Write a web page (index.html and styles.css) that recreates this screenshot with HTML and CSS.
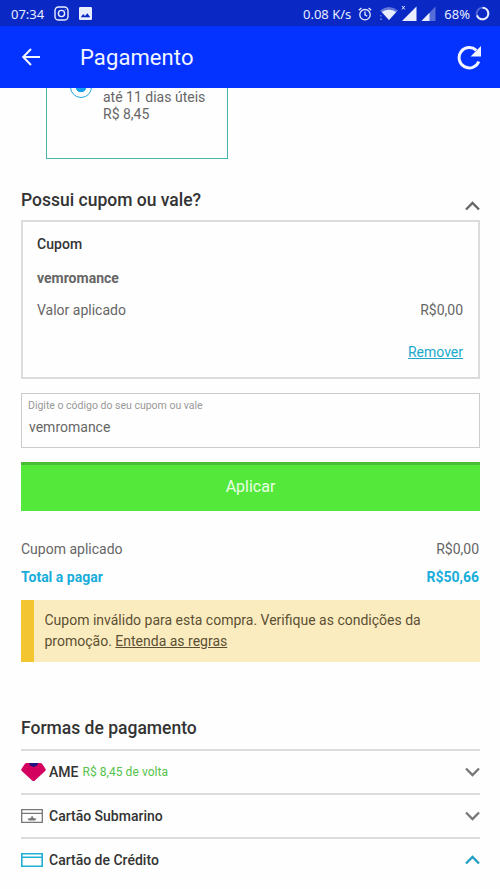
FILE: index.html
```html
<!DOCTYPE html>
<html lang="pt-BR">
<head>
<meta charset="utf-8">
<meta name="viewport" content="width=device-width, initial-scale=1">
<title>Pagamento</title>
<link rel="stylesheet" href="styles.css">
</head>
<body>
<div class="status">
  <span class="clock">07:34</span>
  <svg class="insta" width="15" height="15" viewBox="0 0 15 15" fill="none" stroke="currentColor" stroke-width="1.4"><rect x="1" y="1" width="13" height="13" rx="3.6"/><circle cx="7.5" cy="7.5" r="3.1"/><circle cx="11.2" cy="3.8" r=".5" fill="currentColor" stroke="none"/></svg>
  <svg class="photo" width="13" height="13" viewBox="0 0 13 13"><rect width="13" height="13" rx="1.2" fill="currentColor"/><path d="M1.8 10.3 4.2 7l1.8 2 2.3-2.8 3 4.1z" fill="#0a28c4"/></svg>
  <span class="speed">0.08 K/s</span>
  <svg class="alarm" width="14" height="14" viewBox="0 0 14 14" fill="none" stroke="currentColor" stroke-width="1.3"><circle cx="7" cy="7.7" r="5.2"/><path d="M7 4.5v3.4l2.2 1.4M.8 3.2 3.4 1M13.2 3.2 10.6 1"/></svg>
  <svg class="wifi" width="20" height="15" viewBox="0 0 20 15" fill="currentColor"><path opacity=".4" d="M1 4.5Q10-2.5 19 4.5L10 14z"/><path d="M2.8 6Q10 1.4 17.2 6L10 14z"/><path opacity=".4" d="M1 9h1.5v1.5H1zM1 12.5h2V14H1z"/></svg>
  <svg class="cell" width="16" height="17" viewBox="0 0 16 17" fill="currentColor"><path d="M15.5 1.500V16H1z"/><path d="m1 1 2.800 3.400m0-3.400L1 4.400" fill="none" stroke="currentColor"/></svg>
  <svg class="cell weak" width="15" height="17" viewBox="0 0 15 17" fill="currentColor"><path opacity=".35" d="M14.5 1.500V16H.5z"/><path d="M8.500 7.800V16H.5z"/></svg>
  <span class="percent">68%</span>
  <svg class="battery" width="15" height="15" viewBox="0 0 15 15" fill="none" stroke="currentColor" stroke-width="2.1"><circle cx="7.5" cy="7.5" r="5.8" opacity=".3"/><path d="M7.5 1.7a5.8 5.8 0 1 1-5.5 7.6"/></svg>
</div>
<header class="appbar">
  <svg class="back" width="20" height="18" viewBox="0 0 20 18" fill="none" stroke="currentColor" stroke-width="2"><path d="M10 1 2.2 9l7.8 8M2.2 9H19"/></svg>
  <h1>Pagamento</h1>
  <svg class="reload" width="25" height="25" viewBox="0 0 25 25"><path d="M21.800 16.500A10.200 10.200 0 1 1 19.300 5.300" fill="none" stroke="currentColor" stroke-width="3"/><path d="M24 1v10.400H13.600z" fill="currentColor"/></svg>
</header>
<main>
  <section class="shipping">
    <span class="radio"></span>
    <p>até 11 dias úteis<br>R$ 8,45</p>
  </section>

  <div class="coupon-head">
    <h2>Possui cupom ou vale?</h2>
    <svg class="chevron dark" width="15" height="10" viewBox="0 0 15 10"><path d="M1 8.5 7.5 2 14 8.5"/></svg>
  </div>
  <section class="coupon">
    <h3>Cupom</h3>
    <strong>vemromance</strong>
    <div class="row"><span>Valor aplicado</span><span>R$0,00</span></div>
    <a href="#">Remover</a>
  </section>
  <label class="field">
    <span>Digite o código do seu cupom ou vale</span>
    <input type="text" value="vemromance" spellcheck="false">
  </label>
  <button class="apply" type="button">Aplicar</button>
  <div class="row summary"><span>Cupom aplicado</span><span>R$0,00</span></div>
  <div class="row total"><span>Total a pagar</span><span>R$50,66</span></div>
  <p class="notice">Cupom inválido para esta compra. Verifique as condições da<br>promoção. <a href="#">Entenda as regras</a></p>

  <h2 class="methods-title">Formas de pagamento</h2>
  <ul class="methods">
    <li>
      <svg class="method-icon" width="25" height="20" viewBox="0 0 25 20"><path d="M5.5 1h14q1 0 1.6.8l3.3 5q.8 1.2-.2 2.2l-10.3 9.6q-1.400 1-2.800 0L.8 9Q-.2 8 .6 6.800l3.300-5Q4.500 1 5.500 1z" fill="#d3005f"/><path d="M8 1h9.200l-1.500 3h-1.200l-1.900 1.300L10.700 4H9.500z" fill="#201080"/></svg>
      <b>AME</b><em>R$ 8,45 de volta</em>
      <svg class="chevron" width="15" height="10" viewBox="0 0 15 10"><path d="M1 1.500 7.500 8 14 1.500"/></svg>
    </li>
    <li>
      <svg class="method-icon" width="25" height="14" viewBox="0 0 25 14" fill="none" stroke="#777" stroke-width="1.300"><path d="M.7.700h20.600v12.600H.7zM.7 4.400h20.600"/><path d="M6.500 9.500h9l-1.300 2H7.800zM8.300 9.500l2-1V7.200h1.600v1.300l2 1" fill="#777" stroke="none"/></svg>
      <b>Cartão Submarino</b>
      <svg class="chevron" width="15" height="10" viewBox="0 0 15 10"><path d="M1 1.500 7.500 8 14 1.500"/></svg>
    </li>
    <li>
      <svg class="method-icon" width="25" height="14" viewBox="0 0 25 14" fill="none" stroke="#20afd5" stroke-width="1.600"><path d="M.8.800h20.400v12.400H.8zM.8 4.200h20.400"/></svg>
      <b>Cartão de Crédito</b>
      <svg class="chevron open" width="15" height="10" viewBox="0 0 15 10"><path d="M1 8.500 7.500 2 14 8.500"/></svg>
    </li>
  </ul>
</main>
</body>
</html>
```
FILE: styles.css
```css
* { box-sizing: border-box; margin: 0; padding: 0; }
body {
  width: 500px;
  height: 889px;
  overflow: hidden;
  background: #fefefe;
  color: #666;
  font: 14px/17px Roboto, "Liberation Sans", sans-serif;
}
svg { display: block; flex: none; }

.status {
  display: flex;
  align-items: center;
  height: 26px;
  padding: 1px 11px 0;
  background: #0a28c4;
  color: #e8edff;
  font: 13px/24px "Noto Sans", sans-serif;
  white-space: nowrap;
}
.insta { margin-left: 10px; }
.clock { width: 33px; }
.photo { margin-left: 10px; }
.speed { width: 49px; margin-left: 211px; }
.alarm { margin-left: 7px; }
.wifi { margin-left: 7px; }
.cell { margin-left: 2px; }
.weak { margin-left: 4px; }
.percent { width: 26px; margin-left: 8px; }
.battery { margin-left: 5px; }

.appbar {
  display: flex;
  align-items: center;
  height: 62px;
  padding: 0 18px 0 21px;
  background: #0433ff;
  color: #f2f5ff;
}
.appbar h1 { margin: 2px 0 0 39px; font-size: 22px; line-height: 28px; font-weight: 400; letter-spacing: .1px; }
.reload { margin-left: auto; }

main { padding: 0 20px 0 21px; }
.shipping {
  display: flex;
  width: 182px;
  height: 71px;
  margin-left: 25px;
  border: 1px solid #45b3ae;
  border-top: 0;
}
.radio {
  width: 22px;
  height: 22px;
  margin: -12px 11px 0 23px;
  border: 1px solid #22a9df;
  border-radius: 50%;
  background: radial-gradient(circle, #159fe8 5px, transparent 5.5px);
  clip-path: inset(12px 0 0);
}
.shipping p { padding-top: 1px; }

h2 { color: #333; font-size: 17.5px; line-height: 22px; font-weight: 500; }
.coupon-head { display: flex; justify-content: space-between; margin-top: 30px; height: 31px; }
.chevron { fill: none; stroke: #777; stroke-width: 2.3; }
.chevron.dark { margin-top: 12px; stroke: #666; }
.chevron.open { stroke: #229fc3; }

.coupon { height: 159px; padding: 14px 15px 0 14px; border: 2px solid #dcdcdc; }
.coupon h3 { color: #333; font-size: 14px; line-height: 17px; font-weight: 500; letter-spacing: .05px; }
.coupon strong { display: block; margin-top: 17px; font-weight: 700; }
.row { display: flex; justify-content: space-between; }
.coupon .row { margin-top: 15px; }
.coupon a { display: block; width: max-content; margin: 25px 0 0 auto; color: #20a9cd; }

.field { display: block; height: 55px; margin-top: 14px; padding: 5px 6px; border: 1px solid #ccc; }
.field span { display: block; color: #999; font-size: 10.5px; line-height: 13px; }
.field input { display: block; width: 100%; height: 20px; margin-top: 5px; padding: 0 1px; border: 0; background: none; color: #666; font: inherit; }
.apply {
  display: block;
  width: 100%;
  height: 49px;
  margin-top: 14px;
  padding-bottom: 2px;
  border: 0;
  border-top: 3px solid #49bd35;
  background: #54e93a;
  color: #e9ffe5;
  font: 16px/20px Roboto, sans-serif;
}
.summary { margin-top: 30px; }
.row.summary, .row.total { padding-right: 1px; }
.total { margin-top: 11px; color: #18addb; font-weight: 700; }
.notice { height: 62px; margin-top: 14px; padding: 10px 0 0 10.5px; border-left: 13px solid #f2c531; background: #fbecc0; color: #5b5033; line-height: 21px; white-space: nowrap; }
.notice a { color: inherit; }

.methods-title { margin-top: 55px; }
.methods { margin-top: 10px; list-style: none; }
.methods li { display: flex; align-items: center; height: 44px; border-top: 2px solid #dcdcdc; }
.method-icon { margin-right: 3px; }
.methods b { color: #333; font-weight: 500; }
.methods em { margin-left: 4px; color: #55c34a; font-size: 12px; font-style: normal; letter-spacing: .06px; }
.methods .chevron { margin-left: auto; }
```
